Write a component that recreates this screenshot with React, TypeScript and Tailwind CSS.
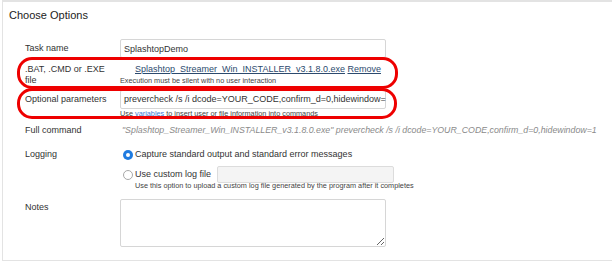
import React from "react";

function Label({ children, className = "" }: { children: React.ReactNode; className?: string }) {
  return <div className={`w-[95px] shrink-0 pr-[12px] text-[9px] leading-[11px] text-[#333] ${className}`}>{children}</div>;
}

export default function App() {
  return (
    <div className="relative w-[612px] h-[263px] bg-white overflow-hidden font-['Liberation_Sans',Arial,sans-serif]">
      <div className="ml-[2px] h-[261px] border-t-2 border-l border-b border-[#e3e3e3]">
        {/* Title */}
        <div className="pt-[6px] pl-[6px] text-[11px] leading-[14px] text-[#222]">Choose Options</div>

        <div className="pl-[22px] flex flex-col">
          {/* Task name */}
          <div className="mt-[17px] flex items-center">
            <Label>Task name</Label>
            <input
              readOnly
              value="SplashtopDemo"
              className="w-[266px] h-[19px] px-[3px] border border-[#d6d6d6] rounded-[2px] text-[9px] text-[#333] outline-none"
            />
          </div>

          {/* File */}
          <div className="mt-[6px] flex">
            <Label>.BAT, .CMD or .EXE file</Label>
            <div className="flex flex-col">
              <div className="pl-[15px] text-[9px] leading-[11px]">
                <span className="text-[#2c4a6e] underline">Splashtop_Streamer_Win_INSTALLER_v3.1.8.0.exe</span>{" "}
                <span className="text-[#2c4a6e] underline">Remove</span>
              </div>
              <div className="mt-[2px] text-[7.3px] leading-[8px] text-[#444]">
                Execution must be silent with no user interaction
              </div>
            </div>
          </div>

          {/* Optional parameters */}
          <div className="mt-[4px] flex items-center">
            <Label>Optional parameters</Label>
            <div className="w-[266px] h-[19px] px-[3px] border border-[#d6d6d6] rounded-[2px] text-[9px] leading-[17px] text-[#333] whitespace-nowrap">
              prevercheck /s /i dcode=YOUR_CODE,confirm_d=0,hidewindow=
            </div>
          </div>
          <div className="flex">
            <div className="w-[95px] shrink-0" />
            <div className="mt-[1px] text-[7.3px] leading-[8px] text-[#444]">
              Use <span className="text-[#3a7bd5]">variables</span> to insert user or file information into commands
            </div>
          </div>

          {/* Full command */}
          <div className="mt-[7px] flex items-center">
            <Label>Full command</Label>
            <div className="pl-[2px] text-[8.8px] leading-[11px] italic text-[#8a8a8a] whitespace-nowrap">
              "Splashtop_Streamer_Win_INSTALLER_v3.1.8.0.exe" prevercheck /s /i dcode=YOUR_CODE,confirm_d=0,hidewindow=1
            </div>
          </div>

          {/* Logging */}
          <div className="mt-[13px] flex items-center">
            <Label>Logging</Label>
            <div className="flex items-center pl-[3px]">
              <span className="w-[10px] h-[10px] rounded-full bg-[#1f7be0] flex items-center justify-center">
                <span className="w-[4px] h-[4px] rounded-full bg-white" />
              </span>
              <span className="ml-[2px] text-[9px] leading-[11px] text-[#333]">
                Capture standard output and standard error messages
              </span>
            </div>
          </div>
          <div className="mt-[6px] flex items-center">
            <div className="w-[95px] shrink-0" />
            <div className="flex items-center pl-[3px]">
              <span className="w-[10px] h-[10px] rounded-full border border-[#a8a8a8] bg-white" />
              <span className="ml-[2px] text-[9px] leading-[11px] text-[#333]">Use custom log file</span>
              <div className="ml-[6px] w-[177px] h-[17px] border border-[#dcdcdc] rounded-[2px] bg-[#f4f4f4]" />
            </div>
          </div>
          <div className="flex">
            <div className="w-[110px] shrink-0" />
            <div className="-mt-[1px] text-[7.3px] leading-[8px] text-[#444]">
              Use this option to upload a custom log file generated by the program after it completes
            </div>
          </div>

          {/* Notes */}
          <div className="mt-[9px] flex items-start">
            <Label className="mt-[3px]">Notes</Label>
            <textarea
              readOnly
              className="w-[266px] h-[48px] border border-[#d6d6d6] rounded-[2px] outline-none resize"
            />
          </div>
        </div>
      </div>

      {/* Annotation outlines */}
      <div className="absolute left-[17px] top-[57px] w-[381px] h-[32px] border-[3px] border-[#ee0000] rounded-[15px]" />
      <div className="absolute left-[17px] top-[88px] w-[380px] h-[31px] border-[3px] border-[#ee0000] rounded-[15px]" />
    </div>
  );
}
